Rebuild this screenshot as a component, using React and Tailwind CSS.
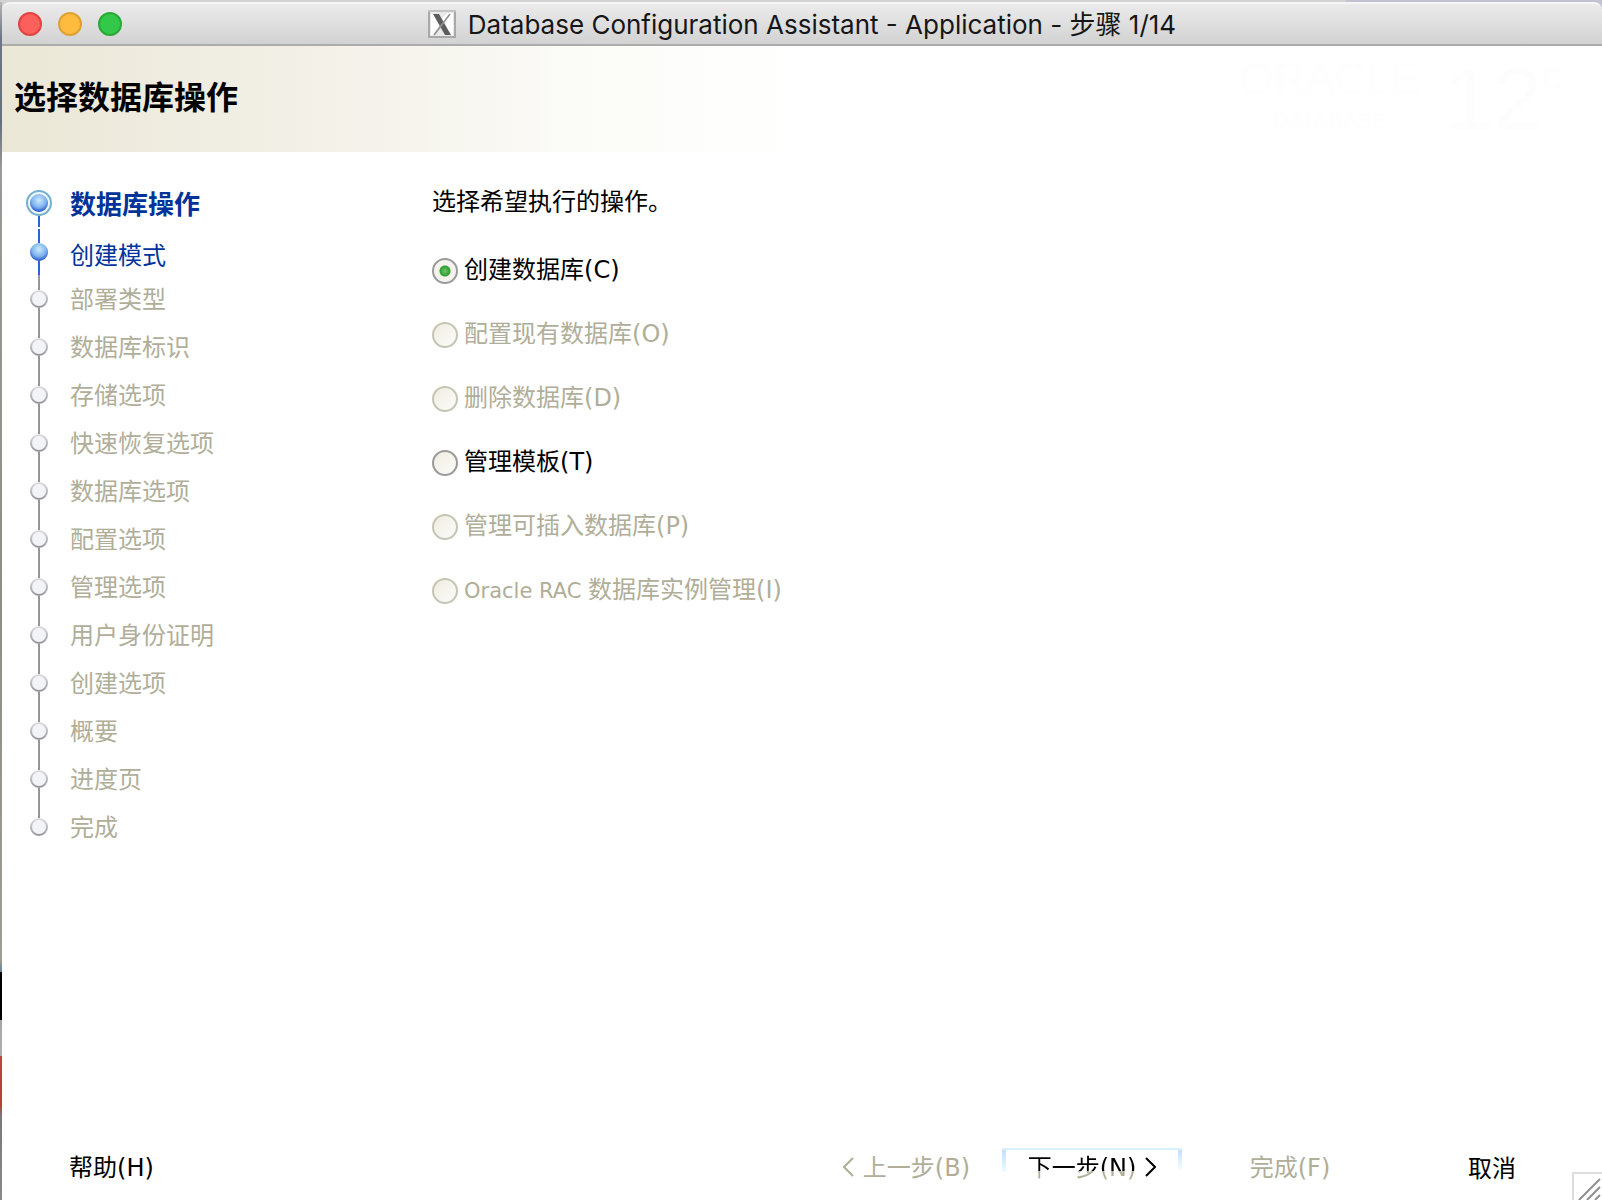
import { useState } from "react";

const steps = [
  "数据库操作",
  "创建模式",
  "部署类型",
  "数据库标识",
  "存储选项",
  "快速恢复选项",
  "数据库选项",
  "配置选项",
  "管理选项",
  "用户身份证明",
  "创建选项",
  "概要",
  "进度页",
  "完成",
];

const operations = [
  { id: "create", label: "创建数据库", key: "C" },
  { id: "configure", label: "配置现有数据库", key: "O", disabled: true },
  { id: "delete", label: "删除数据库", key: "D", disabled: true },
  { id: "template", label: "管理模板", key: "T" },
  { id: "pluggable", label: "管理可插入数据库", key: "P", disabled: true },
  { id: "rac", latin: "Oracle RAC ", label: "数据库实例管理", key: "I", disabled: true },
];

function Mnemonic({ children }) {
  return <span className="font-['DejaVu_Sans',sans-serif]">({children})</span>;
}

function TitleBar() {
  return (
    <header className="relative flex h-[44px] items-center justify-center rounded-t-[8px] border-t-2 border-b-2 border-t-[#f6f6f6] border-b-[#acacac] bg-linear-to-b from-[#ebebeb] to-[#d2d2d2]">
      <div className="absolute left-4 flex gap-4">
        <button type="button" aria-label="Close" className="size-6 rounded-full border-2 border-[#e2433f] bg-[#fc605c]" />
        <button type="button" aria-label="Minimize" className="size-6 rounded-full border-2 border-[#dfa032] bg-[#fdbc40]" />
        <button type="button" aria-label="Zoom" className="size-6 rounded-full border-2 border-[#27aa35] bg-[#34c84a]" />
      </div>
      <div className="flex items-center gap-3">
        <svg viewBox="0 0 28 30" className="h-[30px] w-[28px]" aria-hidden="true">
          <rect x="0" y="1" width="28" height="28" fill="#a9a9a9" />
          <rect x="0" y="1" width="28" height="2" fill="#c3c3c3" />
          <path d="M2 3h24v24H2z" fill="#e9e9e9" />
          <path d="M3 5h4l5 10-7 11H3zM14 9l6-5h5v22h-2l-7-11z" fill="#fff" />
          <path d="M5 5h6l12 21h-6z" fill="#5d5d5d" />
          <path d="M22 5 6 26" stroke="#8f8f8f" strokeWidth="1.6" />
        </svg>
        <h1 className="pt-px font-['Inter','Noto_Sans_CJK_SC',sans-serif] text-[26px] leading-8 whitespace-nowrap text-[#161616]">
          Database Configuration Assistant - Application - 步骤 1/14
        </h1>
      </div>
    </header>
  );
}

function Banner() {
  return (
    <div className="flex h-[106px] items-center justify-between bg-[linear-gradient(to_right,#ebe7d6_0px,#efede1_180px,#f5f3eb_390px,#fbfbf7_560px,#ffffff_800px)] pr-10 pl-3">
      <h2 className="pb-2 text-[32px] leading-10 font-bold text-black">选择数据库操作</h2>
      <div className="flex items-center gap-6 font-['Liberation_Sans',sans-serif] text-[#fefefe]" aria-hidden="true">
        <div className="text-center">
          <div className="text-[44px] leading-[44px]">ORACLE</div>
          <div className="text-[22px] leading-10">DATABASE</div>
        </div>
        <div className="flex items-start">
          <span className="text-[88px] leading-[88px] text-[#fdfdfd]">12</span>
          <span className="text-[40px] leading-10">c</span>
        </div>
      </div>
    </div>
  );
}

function Dot({ state }) {
  if (state === "current") {
    return (
      <svg viewBox="0 0 26 26" className="size-[26px]" aria-hidden="true">
        <circle cx="13" cy="13" r="12" fill="#eef7fb" stroke="#74b0cc" strokeWidth="2" />
        <circle cx="13" cy="13" r="9" fill="url(#ball)" />
      </svg>
    );
  }
  if (state === "next") {
    return (
      <svg viewBox="0 0 18 18" className="size-[18px]" aria-hidden="true">
        <circle cx="9" cy="9" r="9" fill="url(#ball)" />
      </svg>
    );
  }
  return (
    <svg viewBox="0 0 18 18" className="size-[18px]" aria-hidden="true">
      <circle cx="9" cy="9" r="8" fill="#f2f4f8" stroke="url(#rim)" strokeWidth="2" />
    </svg>
  );
}

function StepList() {
  return (
    <nav className="w-[428px] shrink-0 pt-[27px] pl-6">
      <svg className="absolute size-0" aria-hidden="true">
        <defs>
          <radialGradient id="ball" cx="0.5" cy="0.35" r="0.65">
            <stop offset="0" stopColor="#cfe8fb" />
            <stop offset="0.6" stopColor="#7fb5f0" />
            <stop offset="1" stopColor="#2450cc" />
          </radialGradient>
          <linearGradient id="rim" x1="0" y1="0" x2="0" y2="1">
            <stop offset="0" stopColor="#dcdcdc" />
            <stop offset="1" stopColor="#98989c" />
          </linearGradient>
        </defs>
      </svg>
      <ol>
        {steps.map((name, i) => {
          const active = i < 2;
          const line = active ? "bg-[#2f62d8]" : "bg-[#97979b]";
          return (
            <li key={name} className={`flex items-stretch gap-[18px] ${i === 0 ? "h-[50px]" : i === 1 ? "h-[46px]" : "h-[48px]"}`}>
              <div className="flex w-[26px] flex-col items-center">
                <span className={`w-[2px] flex-1 ${i === 0 ? "" : line}`} />
                <Dot state={i === 0 ? "current" : i === 1 ? "next" : "pending"} />
                <span className={`w-[2px] flex-1 ${i === steps.length - 1 ? "" : line} ${i === 0 ? "mb-[2px]" : ""}`} />
              </div>
              <span
                aria-current={i === 0 ? "step" : undefined}
                className={`self-center whitespace-nowrap ${i === 0 ? "pb-1 text-[26px] font-bold" : i === 1 ? "pt-1 text-2xl" : "pb-[2px] text-2xl"} ${active ? "text-[#003399]" : "text-[#b0ae98]"}`}
              >
                {name}
              </span>
            </li>
          );
        })}
      </ol>
    </nav>
  );
}

function Operations() {
  const [selected, setSelected] = useState("create");
  return (
    <fieldset className="min-w-0 flex-1 pt-8">
      <legend className="float-left w-full pl-[2px] text-2xl leading-8 text-black">选择希望执行的操作。</legend>
      <div className="clear-both pt-[23px]">
        {operations.map((op) => (
          <label
            key={op.id}
            className={`flex h-16 w-fit items-center gap-[6px] pl-[2px] text-2xl whitespace-nowrap ${op.disabled ? "text-[#b0ae98]" : "text-black"}`}
          >
            <input
              type="radio"
              name="operation"
              value={op.id}
              checked={selected === op.id}
              disabled={op.disabled}
              onChange={() => setSelected(op.id)}
              className="size-[26px] appearance-none rounded-full border-2 border-[#9a9a98] bg-linear-to-br from-[#efece1] to-[#fcfbf9] checked:bg-[radial-gradient(circle,#6cc66a_0px,#2f9e33_5px,#f3f1ea_6px,#f8f7f3_100%)] disabled:border-[#c6c4b3]"
            />
            <span className="pb-1">
              {op.latin && <span className="font-['DejaVu_Sans',sans-serif] text-[21px]">{op.latin}</span>}
              {op.label}
              <Mnemonic>{op.key}</Mnemonic>
            </span>
          </label>
        ))}
      </div>
    </fieldset>
  );
}

function Chevron({ direction }) {
  return (
    <svg viewBox="0 0 12 20" className="h-5 w-3" fill="none" stroke="currentColor" strokeWidth="2" aria-hidden="true">
      <path d={direction === "left" ? "M10 1 1 10l9 9" : "M2 1l9 9-9 9"} />
    </svg>
  );
}

function Footer() {
  return (
    <footer className="flex h-[66px] items-center justify-between pr-5 pl-[67px] text-2xl leading-8 whitespace-nowrap">
      <button type="button" className="text-black">
        帮助<Mnemonic>H</Mnemonic>
      </button>
      <div className="flex items-center gap-[18px]">
        <button type="button" disabled className="flex w-[180px] items-center justify-end gap-2 pr-[14px] text-[#b0ae98]">
          <Chevron direction="left" />
          <span>
            上一步<Mnemonic>B</Mnemonic>
          </span>
        </button>
        <button type="button" className="relative flex w-[180px] items-center justify-center gap-2 text-black">
          <span className="absolute inset-x-0 -top-[2px] flex h-6 justify-between border-t-2 border-[#d9f2ff]">
            <span className="w-1 bg-linear-to-b from-[#c4dfff] to-[#eefcff]" />
            <span className="w-1 bg-linear-to-b from-[#c4dfff] to-[#ffffff]" />
          </span>
          <span className="bg-[linear-gradient(to_bottom,#000000_0px,#000000_21px,#b0ae98_21px,#b0ae98_100%)] bg-clip-text text-transparent">
            下一步<Mnemonic>N</Mnemonic>
          </span>
          <Chevron direction="right" />
        </button>
        <button type="button" disabled className="w-[180px] text-[#b0ae98]">
          完成<Mnemonic>F</Mnemonic>
        </button>
        <button type="button" className="ml-1 w-[180px] text-black">
          取消
        </button>
      </div>
    </footer>
  );
}

export default function App() {
  return (
    <div className="relative flex min-h-screen bg-[linear-gradient(to_right,#d2d2d2_84%,#c3c2d0_84%)] pt-[2px] font-['Noto_Sans_CJK_SC',sans-serif]">
      <div className="w-[2px] shrink-0 bg-[linear-gradient(to_bottom,#b5b5b5_0%,#6d7684_3%,#65707e_10%,#9a9a98_14%,#8f8d84_50%,#a09d93_80%,#5f7f9c_81%,#000000_81%,#000000_85%,#a5a5a5_85%,#b0b0b0_88%,#c0453a_88%,#b8402f_92%,#77787c_93%,#8a8a8c_100%)]" />
      <div className="flex min-w-0 flex-1 flex-col">
        <TitleBar />
        <Banner />
        <main className="flex flex-1 bg-white">
          <StepList />
          <Operations />
        </main>
        <div className="bg-white">
          <Footer />
        </div>
      </div>
      <svg viewBox="0 0 30 28" className="absolute right-0 bottom-0 h-7 w-[30px]" fill="none" aria-hidden="true">
        <path d="M1 28V1h29" stroke="#dddddd" strokeWidth="2" />
        <path d="M7 28 28 7M15 28l13-13M23 28l5-5" stroke="#8f8f8f" strokeWidth="2" />
      </svg>
    </div>
  );
}
